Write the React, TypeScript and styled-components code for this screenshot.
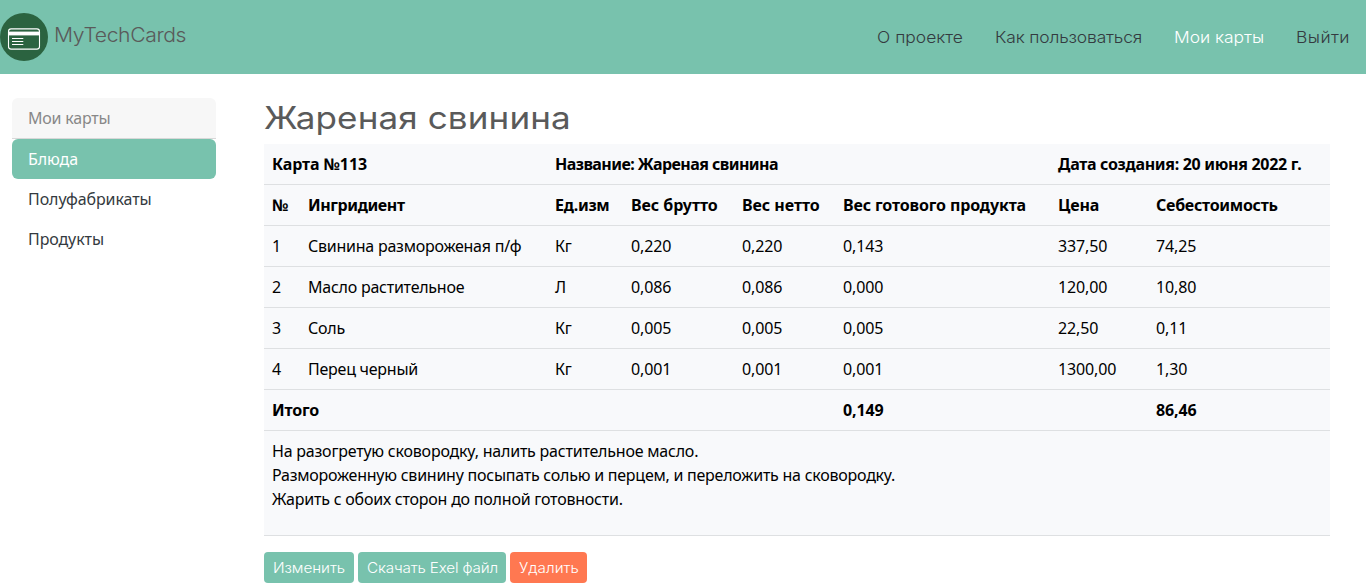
import React from 'react';
import styled, { createGlobalStyle } from 'styled-components';

const display = 'Inter, "Open Sans", sans-serif';
const body = '"Noto Sans", "Open Sans", sans-serif';

const GlobalStyle = createGlobalStyle`
  *, *::before, *::after { box-sizing: border-box; }
  body {
    margin: 0;
    background: #fff;
    color: #000;
    font: 400 16px/24px ${body};
    overflow-x: hidden;
  }
`;

const Track = styled.span<{ $by: number }>`
  letter-spacing: ${p => p.$by}px;
  white-space: nowrap;
`;

const Wide = styled(Track)<{ $stretch?: number }>`
  display: inline-block;
  transform: scaleX(${p => p.$stretch ?? 1.09});
  transform-origin: left;
`;

const Navbar = styled.header`
  display: flex;
  justify-content: space-between;
  align-items: center;
  height: 74px;
  background: #78c2ad;
  font-family: ${display};
`;

const Brand = styled.a`
  display: flex;
  gap: 5.5px;
  color: #5a5a5a;
  font-size: 19.4px;
  font-weight: 300;
  line-height: 30px;
`;

const BrandName = styled.span`
  margin-top: 7px;
`;

const NavLinks = styled.nav`
  display: flex;
`;

const NavLink = styled.a<{ $active?: boolean; $w: number }>`
  width: ${p => p.$w}px;
  padding: 8px 0 8px 16px;
  color: ${p => (p.$active ? '#fff' : '#343a40')};
  font-weight: 300;
`;

const Page = styled.div`
  display: flex;
  gap: 48px;
  padding: 24px 36px 0 12px;
`;

const Sidebar = styled.aside`
  flex: 0 0 204px;
`;

const SidebarTitle = styled.div`
  height: 41px;
  padding: 8px 16px;
  border-bottom: 1px solid #d8d8d8;
  border-radius: 6px 6px 0 0;
  background: #f7f7f7;
  color: #888;
`;

const SidebarItem = styled.a<{ $active?: boolean }>`
  display: block;
  height: 40px;
  padding: 8px 16px;
  border-radius: 6px;
  background: ${p => (p.$active ? '#78c2ad' : 'transparent')};
  color: ${p => (p.$active ? '#fff' : '#343a40')};
`;

const Main = styled.main`
  flex: 1;
`;

const Title = styled.h1`
  margin: 0 0 7px;
  padding-top: 1px;
  color: #5a5a5a;
  font: 400 31px/38px ${display};
`;

const Table = styled.table`
  width: 1066px;
  table-layout: fixed;
  border-collapse: separate;
  border-spacing: 0;
  background: #f8f9fb;
`;

const Col = styled.col<{ $w: number }>`
  width: ${p => p.$w}px;
`;

const Cell = styled.td<{ $bold?: boolean }>`
  height: 41px;
  padding: 8px;
  border-bottom: 1px solid #dee0e2;
  font-weight: ${p => (p.$bold ? 700 : 400)};
  text-align: left;
  vertical-align: top;
  white-space: nowrap;
`;

const RecipeCell = styled(Cell)`
  height: 105px;
`;

const Line = styled.div`
  height: 24px;
`;

const Actions = styled.div`
  display: flex;
  gap: 4px;
  margin-top: 16px;
`;

const Button = styled.button<{ $danger?: boolean; $w: number }>`
  width: ${p => p.$w}px;
  height: 31px;
  padding: 4px 0 4px 9px;
  border: 0;
  border-radius: 4px;
  background: ${p => (p.$danger ? '#ff7851' : '#78c2ad')};
  color: #fff;
  font: 300 14px/22px ${display};
  text-align: left;
`;

const Logo = () => (
  <svg width="48" height="48" viewBox="0 0 48 48" fill="none">
    <circle cx="24" cy="24" r="24" fill="#2b6340" />
    <rect x="8.5" y="15.9" width="31" height="20.2" rx="2.6" stroke="#fff" strokeWidth="1.1" />
    <rect x="8.5" y="18.6" width="31" height="3.8" fill="#fff" />
    <path d="M12 25.5h11.3M12 28.5h11.3M12 31.5h11.3" stroke="#fff" strokeWidth="1" />
  </svg>
);

type Text = [string, number];

const links: [string, number, number][] = [
  ['О проекте', 0, 118],
  ['Как пользоваться', -0.15, 179],
  ['Мои карты', -0.03, 122],
  ['Выйти', 0.4, 86],
];

const columns = [36, 247, 76, 111, 101, 215, 98, 182];

const headings: Text[] = [
  ['№', 0],
  ['Ингридиент', -0.4],
  ['Ед.изм', -0.35],
  ['Вес брутто', -0.05],
  ['Вес нетто', -0.05],
  ['Вес готового продукта', -0.13],
  ['Цена', -0.2],
  ['Себестоимость', -0.28],
];

const rows = [
  ['1', 'Свинина размороженая п/ф', 'Кг', '0,220', '0,220', '0,143', '337,50', '74,25'],
  ['2', 'Масло растительное', 'Л', '0,086', '0,086', '0,000', '120,00', '10,80'],
  ['3', 'Соль', 'Кг', '0,005', '0,005', '0,005', '22,50', '0,11'],
  ['4', 'Перец черный', 'Кг', '0,001', '0,001', '0,001', '1300,00', '1,30'],
];

export default function App() {
  return (
    <>
      <GlobalStyle />
      <Navbar>
        <Brand>
          <Logo />
          <BrandName><Wide $by={-0.35}>MyTechCards</Wide></BrandName>
        </Brand>
        <NavLinks>
          {links.map(([text, by, w]) => (
            <NavLink key={text} $w={w} $active={text === 'Мои карты'}>
              <Wide $by={by}>{text}</Wide>
            </NavLink>
          ))}
        </NavLinks>
      </Navbar>
      <Page>
        <Sidebar>
          <SidebarTitle><Track $by={-0.2}>Мои карты</Track></SidebarTitle>
          <SidebarItem $active><Track $by={-0.1}>Блюда</Track></SidebarItem>
          <SidebarItem><Track $by={-0.08}>Полуфабрикаты</Track></SidebarItem>
          <SidebarItem><Track $by={-0.1}>Продукты</Track></SidebarItem>
        </Sidebar>
        <Main>
          <Title><Wide $by={0.1} $stretch={1.13}>Жареная свинина</Wide></Title>
          <Table>
            <colgroup>{columns.map((w, i) => <Col key={i} $w={w} />)}</colgroup>
            <tbody>
              <tr>
                <Cell $bold colSpan={2}><Track $by={-0.12}>Карта №113</Track></Cell>
                <Cell $bold colSpan={4}><Track $by={-0.57}>Название: Жареная свинина</Track></Cell>
                <Cell $bold colSpan={2}><Track $by={-0.31}>Дата создания: 20 июня 2022 г.</Track></Cell>
              </tr>
              <tr>
                {headings.map(([text, by]) => (
                  <Cell key={text} $bold><Track $by={by}>{text}</Track></Cell>
                ))}
              </tr>
              {rows.map(row => (
                <tr key={row[0]}>
                  {row.map((text, i) => (
                    <Cell key={i}><Track $by={i === 1 ? -0.24 : -0.15}>{text}</Track></Cell>
                  ))}
                </tr>
              ))}
              <tr>
                <Cell $bold colSpan={5}><Track $by={-0.15}>Итого</Track></Cell>
                <Cell $bold colSpan={2}><Track $by={-0.15}>0,149</Track></Cell>
                <Cell $bold><Track $by={-0.15}>86,46</Track></Cell>
              </tr>
              <tr>
                <RecipeCell colSpan={8}>
                  <Line><Track $by={-0.21}>На разогретую сковородку, налить растительное масло.</Track></Line>
                  <Line><Track $by={-0.24}>Размороженную свинину посыпать солью и перцем, и переложить на сковородку.</Track></Line>
                  <Line><Track $by={-0.22}>Жарить с обоих сторон до полной готовности.</Track></Line>
                </RecipeCell>
              </tr>
            </tbody>
          </Table>
          <Actions>
            <Button $w={90}><Wide $by={-0.05}>Изменить</Wide></Button>
            <Button $w={148}><Wide $by={-0.15}>Скачать Exel файл</Wide></Button>
            <Button $w={77} $danger><Wide $by={0}>Удалить</Wide></Button>
          </Actions>
        </Main>
      </Page>
    </>
  );
}
